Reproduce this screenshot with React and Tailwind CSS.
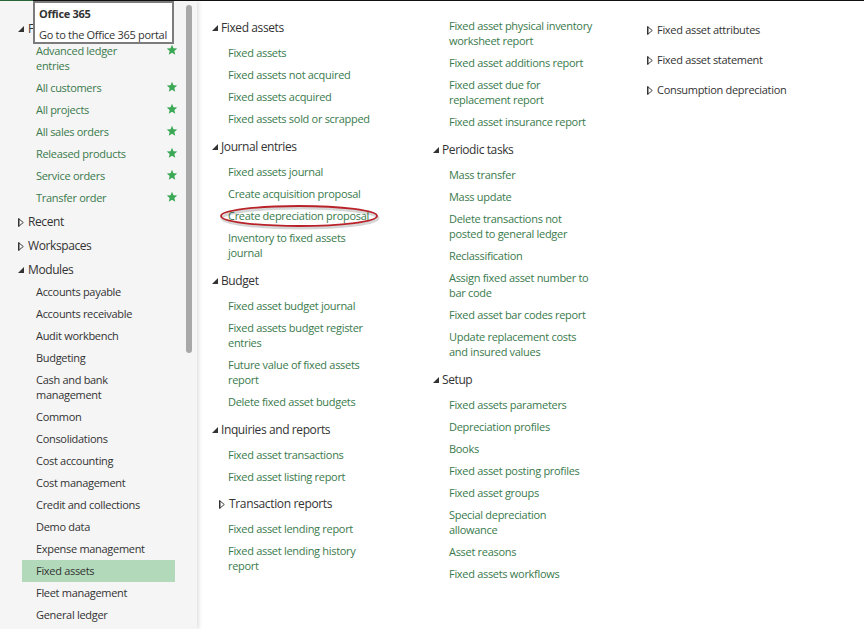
import React from "react";

const FONT = { fontFamily: '"Open Sans", "Liberation Sans", sans-serif' };

function TriDown({ className = "" }) {
  return (
    <svg width="6" height="6" viewBox="0 0 6 6" className={`shrink-0 ${className}`}>
      <polygon points="6,0 6,6 0,6" fill="#333" />
    </svg>
  );
}

function TriRight({ className = "" }) {
  return (
    <svg width="6" height="9" viewBox="0 0 6 9" className={`shrink-0 ${className}`}>
      <polygon points="0.7,0.7 5.3,4.5 0.7,8.3" fill="none" stroke="#444" strokeWidth="1" />
      <line x1="0.7" y1="0.5" x2="0.7" y2="8.5" stroke="#333" strokeWidth="1.4" />
    </svg>
  );
}

function Star() {
  return (
    <svg width="12" height="12" viewBox="0 0 24 24">
      <polygon
        points="12,1.5 14.9,8.6 22.5,9.2 16.7,14.1 18.5,21.6 12,17.6 5.5,21.6 7.3,14.1 1.5,9.2 9.1,8.6"
        fill="#3aa854"
      />
    </svg>
  );
}

function Lines({ text }) {
  const parts = text.split("\n");
  return parts.map((p, i) => (
    <React.Fragment key={i}>
      {p}
      {i < parts.length - 1 && <br />}
    </React.Fragment>
  ));
}

const col1 = [
  {
    title: "Fixed assets",
    items: ["Fixed assets", "Fixed assets not acquired", "Fixed assets acquired", "Fixed assets sold or scrapped"],
  },
  {
    title: "Journal entries",
    items: [
      "Fixed assets journal",
      "Create acquisition proposal",
      { text: "Create depreciation proposal", circled: true },
      "Inventory to fixed assets\njournal",
    ],
  },
  {
    title: "Budget",
    items: [
      "Fixed asset budget journal",
      "Fixed assets budget register\nentries",
      "Future value of fixed assets\nreport",
      "Delete fixed asset budgets",
    ],
  },
  {
    title: "Inquiries and reports",
    items: [
      "Fixed asset transactions",
      "Fixed asset listing report",
      { sub: "Transaction reports" },
      "Fixed asset lending report",
      "Fixed asset lending history\nreport",
    ],
  },
];

const col2 = [
  {
    title: null,
    items: [
      "Fixed asset physical inventory\nworksheet report",
      "Fixed asset additions report",
      "Fixed asset due for\nreplacement report",
      "Fixed asset insurance report",
    ],
  },
  {
    title: "Periodic tasks",
    items: [
      "Mass transfer",
      "Mass update",
      "Delete transactions not\nposted to general ledger",
      "Reclassification",
      "Assign fixed asset number to\nbar code",
      "Fixed asset bar codes report",
      "Update replacement costs\nand insured values",
    ],
  },
  {
    title: "Setup",
    items: [
      "Fixed assets parameters",
      "Depreciation profiles",
      "Books",
      "Fixed asset posting profiles",
      "Fixed asset groups",
      "Special depreciation\nallowance",
      "Asset reasons",
      "Fixed assets workflows",
    ],
  },
];

function Item({ item }) {
  if (typeof item === "object" && item.sub) {
    return (
      <div className="mb-[1px] mt-[4px] flex h-[18px] items-center gap-[4px] pl-[7px] text-[12px] tracking-[-0.35px] text-[#333]">
        <TriRight />
        <span>{item.sub}</span>
      </div>
    );
  }
  const text = typeof item === "string" ? item : item.text;
  const circled = typeof item === "object" && item.circled;
  return (
    <div className="relative whitespace-nowrap pl-[16px] text-[11px] leading-[15px] tracking-[-0.3px] text-[#3a7a4c]">
      <Lines text={text} />
      {circled && (
        <svg
          className="absolute left-[8px] top-[-4px]"
          width="160"
          height="26"
          viewBox="0 0 160 26"
          style={{ overflow: "visible" }}
        >
          <ellipse cx="80" cy="14" rx="78" ry="10" fill="none" stroke="rgba(0,0,0,0.16)" strokeWidth="3" />
          <ellipse cx="79" cy="12" rx="78" ry="10" fill="none" stroke="#b8232a" strokeWidth="1.8" />
        </svg>
      )}
    </div>
  );
}

function Section({ sec }) {
  return (
    <div className="flex flex-col">
      {sec.title && (
        <div className="mb-[8px] flex h-[18px] items-center gap-[3px] text-[12px] tracking-[-0.4px] text-[#333]">
          <TriDown />
          <span>{sec.title}</span>
        </div>
      )}
      <div className="flex flex-col gap-[7px]">
        {sec.items.map((it, i) => (
          <Item key={i} item={it} />
        ))}
      </div>
    </div>
  );
}

const favorites = [
  "Advanced ledger\nentries",
  "All customers",
  "All projects",
  "All sales orders",
  "Released products",
  "Service orders",
  "Transfer order",
];

const modules = [
  "Accounts payable",
  "Accounts receivable",
  "Audit workbench",
  "Budgeting",
  "Cash and bank\nmanagement",
  "Common",
  "Consolidations",
  "Cost accounting",
  "Cost management",
  "Credit and collections",
  "Demo data",
  "Expense management",
  "Fixed assets",
  "Fleet management",
  "General ledger",
  "Human resources",
];

function SideHeader({ label, open }) {
  return (
    <div className="flex h-[24px] shrink-0 items-center gap-[4px] pl-[18px] pt-[2px] text-[12px] tracking-[-0.4px] text-[#333]">
      {open ? <TriDown /> : <TriRight />}
      <span>{label}</span>
    </div>
  );
}

export default function App() {
  return (
    <div
      className="relative flex h-[629px] w-[864px] flex-col overflow-hidden bg-white"
      style={FONT}
    >
      <div className="flex h-[1px] w-full shrink-0 bg-[#111]">
        <div className="h-full w-[33px] bg-[#2b6b3a]" />
      </div>
      <div className="flex min-h-0 flex-1">
        {/* Sidebar */}
        <div className="relative z-10 flex w-[197px] shrink-0 bg-[#f5f5f5] shadow-[2px_0_4px_rgba(0,0,0,0.12)]">
          <div className="flex flex-1 flex-col pt-[15px]">
            <SideHeader label="Favorites" open />
            {favorites.map((f) => (
              <div
                key={f}
                className="ml-[22px] flex w-[156px] shrink-0 items-start justify-between pb-[4px] pl-[14px] pt-[3px] text-[11px] leading-[15px] tracking-[-0.3px] text-[#3a7a4c]"
              >
                <span>
                  <Lines text={f} />
                </span>
                <span className="mt-[1px]">
                  <Star />
                </span>
              </div>
            ))}
            <SideHeader label="Recent" />
            <SideHeader label="Workspaces" />
            <SideHeader label="Modules" open />
            {modules.map((m) => (
              <div
                key={m}
                className={`ml-[22px] w-[153px] shrink-0 pb-[4px] pl-[14px] pt-[3px] text-[11px] leading-[15px] tracking-[-0.3px] text-[#333] ${
                  m === "Fixed assets" ? "bg-[#b2d9ba]" : ""
                }`}
              >
                <Lines text={m} />
              </div>
            ))}
          </div>
          <div className="w-[11px] shrink-0 pt-[4px]">
            <div className="h-[348px] w-[6px] rounded-full bg-[#a8a8a8]" />
          </div>
        </div>

        {/* Main */}
        <div className="flex flex-1 pl-[15px] pt-[17px]">
          <div className="flex w-[221px] shrink-0 flex-col gap-[12px] pt-[1px]">
            {col1.map((s) => (
              <Section key={s.title} sec={s} />
            ))}
          </div>
          <div className="flex w-[214px] shrink-0 flex-col gap-[12px]">
            {col2.map((s, i) => (
              <Section key={i} sec={s} />
            ))}
          </div>
          <div className="flex flex-col gap-[12px] pt-[3px]">
            {["Fixed asset attributes", "Fixed asset statement", "Consumption depreciation"].map((t) => (
              <div
                key={t}
                className="flex h-[18px] items-center gap-[4px] whitespace-nowrap text-[11px] tracking-[-0.3px] text-[#333]"
              >
                <TriRight />
                <span>{t}</span>
              </div>
            ))}
          </div>
        </div>
      </div>

      {/* Tooltip */}
      <div className="absolute left-[33px] top-[1px] z-20 h-[43px] w-[141px] whitespace-nowrap border-2 border-[#7c7c7c] bg-white px-[4px] text-[11px] tracking-[-0.3px] text-[#333]">
        <div className="pt-[3px] font-bold leading-[15px]">Office 365</div>
        <div className="pt-[6px] leading-[15px]">Go to the Office 365 portal</div>
      </div>
    </div>
  );
}
